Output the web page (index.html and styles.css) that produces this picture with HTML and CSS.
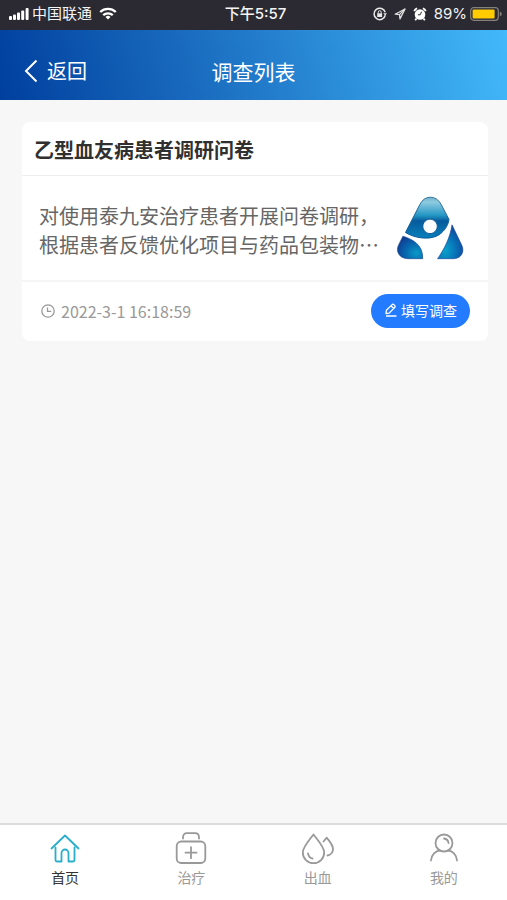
FILE: index.html
```html
<!DOCTYPE html>
<html lang="zh-CN">
<head>
<meta charset="utf-8">
<meta name="viewport" content="width=device-width, initial-scale=1">
<title>调查列表</title>
<link rel="stylesheet" href="styles.css">
</head>
<body>
<div class="status">
  <div class="status-left">
    <svg class="signal" width="20" height="12" viewBox="0 0 20 12" fill="#fff" aria-hidden="true"><rect x="0" y="8" width="3" height="4" rx="1"/><rect x="4" y="6.500" width="3" height="5.500" rx="1"/><rect x="8" y="4.500" width="3" height="7.500" rx="1"/><rect x="12.200" y="2.500" width="3" height="9.500" rx="1"/><rect x="16.600" y="0" width="3" height="12" rx="1"/></svg>
    <span class="carrier">中国联通</span>
    <svg width="18" height="13" viewBox="0 0 18 13" fill="none" stroke="#fff" stroke-width="2.300" aria-hidden="true"><path d="M1.200 5a11.200 11.200 0 0 1 15.600 0M4.200 8.200a7 7 0 0 1 9.600 0"/><path d="M9 12.600 6.500 10a3.600 3.600 0 0 1 5 0Z" fill="#fff" stroke="none"/></svg>
  </div>
  <div class="time">下午5:57</div>
  <div class="status-right">
    <svg width="14" height="14" viewBox="0 0 14 14" fill="none" stroke="#e8e8e8" stroke-width="1.500" aria-hidden="true"><path d="M12.300 8.300A5.700 5.700 0 1 1 12.200 5.200"/><path d="m10.200 6.300 2 2.300 1.800-2.300Z" fill="#e8e8e8" stroke="none"/><rect x="4.200" y="6.300" width="4.900" height="3.700" fill="#e8e8e8" stroke="none"/><path d="M5.200 6.500V5.200a1.500 1.500 0 0 1 3 0v1.300" stroke-width="1"/></svg>
    <svg width="12" height="12" viewBox="0 0 12 12" fill="none" stroke="#ddd" stroke-width="1.300" stroke-linejoin="round" aria-hidden="true"><path d="M11 1 1.200 6.200l4.300.4.500 4.300Z"/><path d="M11 1 5.500 6.600"/></svg>
    <svg width="14" height="14" viewBox="0 0 14 14" aria-hidden="true"><circle cx="7" cy="7.500" r="5.300" fill="#fff"/><path d="M1.200 4.200a6 6 0 0 1 2.900-2.900M9.900 1.300a6 6 0 0 1 2.900 2.900M3.500 11.500l-1.300 1.800M10.500 11.500l1.300 1.800" fill="none" stroke="#fff" stroke-width="1.800"/><path d="M8.600 4.700 7.200 7.800H4.900" fill="none" stroke="#2b2a33" stroke-width="1"/></svg>
    <span class="percent">89%</span>
    <svg width="32" height="14" viewBox="0 0 32 14" aria-hidden="true"><rect x=".7" y=".7" width="27.600" height="12.600" rx="3" fill="none" stroke="#85817c" stroke-width="1.200"/><rect x="2.600" y="2.400" width="22" height="9.200" rx="1" fill="#fc0"/><path d="M29.800 4.800q2 .5 2 2.200t-2 2.200Z" fill="#85817c"/></svg>
  </div>
</div>
<header class="header">
  <a class="back" href="#"><svg width="14" height="24" viewBox="0 0 14 24" fill="none" stroke="#fff" stroke-width="2" aria-hidden="true"><path d="M12.500 1.500 2 12l10.500 10.500"/></svg><span>返回</span></a>
  <h1>调查列表</h1>
</header>
<main class="content">
  <article class="card">
    <h2>乙型血友病患者调研问卷</h2>
    <div class="summary">
      <p>对使用泰九安治疗患者开展问卷调研，根据患者反馈优化项目与药品包装物…</p>
      <svg class="logo" width="68" height="64" viewBox="0 0 68 64" role="img" aria-label="项目标志">
        <defs>
          <linearGradient id="top" x1="0" y1="0" x2="0" y2="1"><stop offset="0" stop-color="#6fb0cc"/><stop offset=".12" stop-color="#8ecbe0"/><stop offset=".45" stop-color="#2195c3"/><stop offset=".58" stop-color="#075b9c"/><stop offset="1" stop-color="#0880ba"/></linearGradient>
          <linearGradient id="edge" x1="0" y1="0" x2="0" y2="1"><stop offset="0" stop-color="#32739a"/><stop offset="1" stop-color="#07549a"/></linearGradient>
          <radialGradient id="left" cx=".75" cy=".75" r=".85"><stop offset="0" stop-color="#0999c6"/><stop offset=".5" stop-color="#0668af"/><stop offset="1" stop-color="#103b91"/></radialGradient>
          <radialGradient id="right" cx=".3" cy=".75" r=".85"><stop offset="0" stop-color="#08a2cb"/><stop offset=".5" stop-color="#0871b6"/><stop offset="1" stop-color="#123e95"/></radialGradient>
        </defs>
        <path fill="url(#top)" stroke="url(#edge)" fill-rule="evenodd" d="M9.500 36.500 23.800 8.600Q27.500 1.200 34.300 1.200T45 8.200L53 23.500C52.200 30 47 37.300 40.300 40.200 31.500 44 18 41.800 9.500 36.500ZM34 23.200a7.200 7.200 0 1 0 .1 0Z"/>
        <path fill="url(#left)" stroke="#143e90" stroke-width=".6" d="M6.900 40.200C15.500 42.800 27.500 48.400 26.700 62.700H12C3.500 62.700-.8 55.500 2.600 48.900Z"/>
        <path fill="url(#right)" stroke="#123e95" stroke-width=".6" d="M56 28.800 65.900 49.500C68.800 56 65 62.700 57.500 62.700H41.500C48 53.600 54.200 41.500 56 28.800Z"/>
      </svg>
    </div>
    <div class="card-footer">
      <div class="date"><svg width="14" height="14" viewBox="0 0 14 14" fill="none" stroke="#999" stroke-width="1.300" aria-hidden="true"><circle cx="7" cy="7" r="6.200"/><path d="M6.500 3.500v3.800h3.800"/></svg><time datetime="2022-03-01T16:18:59">2022-3-1 16:18:59</time></div>
      <button class="fill" type="button"><svg width="12" height="14" viewBox="0 0 12 14" fill="none" stroke="#fff" stroke-width="1.300" stroke-linejoin="round" aria-hidden="true"><path d="m1.400 7.300 5.700-5.700a1.200 1.200 0 0 1 1.700 0l1 1a1.200 1.200 0 0 1 0 1.700l-5.600 5.800-3.200.6ZM6.200 3l2.500 2.500M1 13h10.500"/></svg><span>填写调查</span></button>
    </div>
  </article>
</main>
<nav class="tabs">
  <a class="tab active" href="#"><svg width="32" height="32" viewBox="0 0 32 32" aria-hidden="true"><path d="M2.500 16.500 16 3.500l13.500 13M6.500 15.500V28q0 1.500 1.500 1.500h4.500V21a3.500 3.500 0 0 1 7 0v8.500H24q1.500 0 1.500-1.500V15.500"/></svg><span>首页</span></a>
  <a class="tab" href="#"><svg width="32" height="32" viewBox="0 0 32 32" aria-hidden="true"><rect x="1.700" y="9.500" width="28.600" height="21.500" rx="4.500"/><path d="M8 6.500V5.500Q8 1.200 12 1.200h8q4 0 4 4.300v1M16 15.200v11M10.500 20.700h11"/></svg><span>治疗</span></a>
  <a class="tab" href="#"><svg width="32" height="32" viewBox="0 0 32 32" aria-hidden="true"><path d="M11.500 2.500C7 8.500.8 15 .8 20.500a10.700 10.700 0 0 0 21.400 0C22.200 15 16 8.500 11.500 2.500ZM6 21.500q1 4.500 4.500 5M21.500 9.500l3.300-3.800C28 10 31 13 31 17a6.500 6.500 0 0 1-5.500 6.500"/></svg><span>出血</span></a>
  <a class="tab" href="#"><svg width="32" height="32" viewBox="0 0 32 32" aria-hidden="true"><circle cx="16" cy="11" r="8.500"/><path d="M3 28.500C3.500 22.500 7.500 18.800 12 18.500M20 18.500c4.500.3 8.500 4 9 10M16 6.500q4 .5 4.500 4.500"/></svg><span>我的</span></a>
</nav>
</body>
</html>
```
FILE: styles.css
```css
* {
  box-sizing: border-box;
}

body {
  margin: 0;
  min-height: 100vh;
  display: flex;
  flex-direction: column;
  background: #f7f7f7;
  font-family: "Noto Sans CJK SC", sans-serif;
}

h1, h2, p {
  margin: 0;
}

svg {
  display: block;
  flex: none;
  overflow: visible;
}

a {
  text-decoration: none;
}

.status {
  display: grid;
  grid-template-columns: 1fr auto 1fr;
  align-items: center;
  height: 30px;
  padding: 0 5px 3px 9px;
  background: #2b2a33;
  color: #f4f4f4;
  font-family: Inter, "Noto Sans CJK SC", sans-serif;
  font-size: 15px;
  line-height: 20px;
}

.status-left,
.status-right {
  display: flex;
  align-items: center;
}

.carrier {
  margin: 0 7px 0 3px;
}

.time {
  font-weight: 500;
}

.status-right {
  justify-content: flex-end;
  gap: 7px;
}

.percent {
  margin-right: -4px;
}

.header {
  display: grid;
  grid-template-columns: 1fr auto 1fr;
  align-items: center;
  height: 70px;
  padding: 11px 24px 0;
  background: linear-gradient(75deg, #003f9e 0%, #1c70c2 42%, #42b9fa 100%);
  color: #fff;
}

.header h1 {
  font-size: 21px;
  line-height: 30px;
  font-weight: 400;
}

.back {
  display: flex;
  align-items: center;
  gap: 9px;
  color: #fff;
  font-size: 20px;
  line-height: 30px;
}

.content {
  flex: 1;
  padding: 22px 19px 22px 22px;
}

.card {
  border-radius: 8px;
  background: #fff;
}

.card h2 {
  padding: 14px 12px 11px;
  border-bottom: 1px solid #eee;
  color: #303030;
  font-size: 20px;
  line-height: 28px;
  font-weight: 700;
}

.summary {
  display: flex;
  align-items: flex-start;
  justify-content: space-between;
  padding: 20px 24px 20px 17px;
  border-bottom: 2px solid #f5f5f5;
}

.summary p {
  width: 340px;
  padding-top: 5px;
  color: #666;
  font-size: 20px;
  line-height: 29px;
}

.card-footer {
  display: flex;
  align-items: center;
  justify-content: space-between;
  padding: 12px 18px 13px 19px;
}

.date {
  display: flex;
  align-items: center;
  gap: 6px;
  color: #999;
  font-size: 16px;
  line-height: 24px;
}

.fill {
  display: flex;
  align-items: center;
  gap: 4px;
  height: 34px;
  padding: 0 13px 2px 14px;
  border: 0;
  border-radius: 17px;
  background: #237bff;
  color: #fff;
  font-family: inherit;
  font-size: 14px;
  line-height: 20px;
}

.tabs {
  display: grid;
  grid-template-columns: repeat(4, 1fr);
  height: 77px;
  padding: 7px 0 0 2px;
  border-top: 2px solid #ddd;
  background: #fff;
}

.tab {
  display: flex;
  flex-direction: column;
  align-items: center;
  gap: 3px;
  color: #999;
  font-size: 14px;
  line-height: 20px;
}

.tab svg {
  fill: none;
  stroke: #999;
  stroke-width: 1.800;
  stroke-linecap: round;
  stroke-linejoin: round;
}

.tab.active {
  color: #333;
}

.tab.active svg {
  stroke: #28aeca;
}
```
